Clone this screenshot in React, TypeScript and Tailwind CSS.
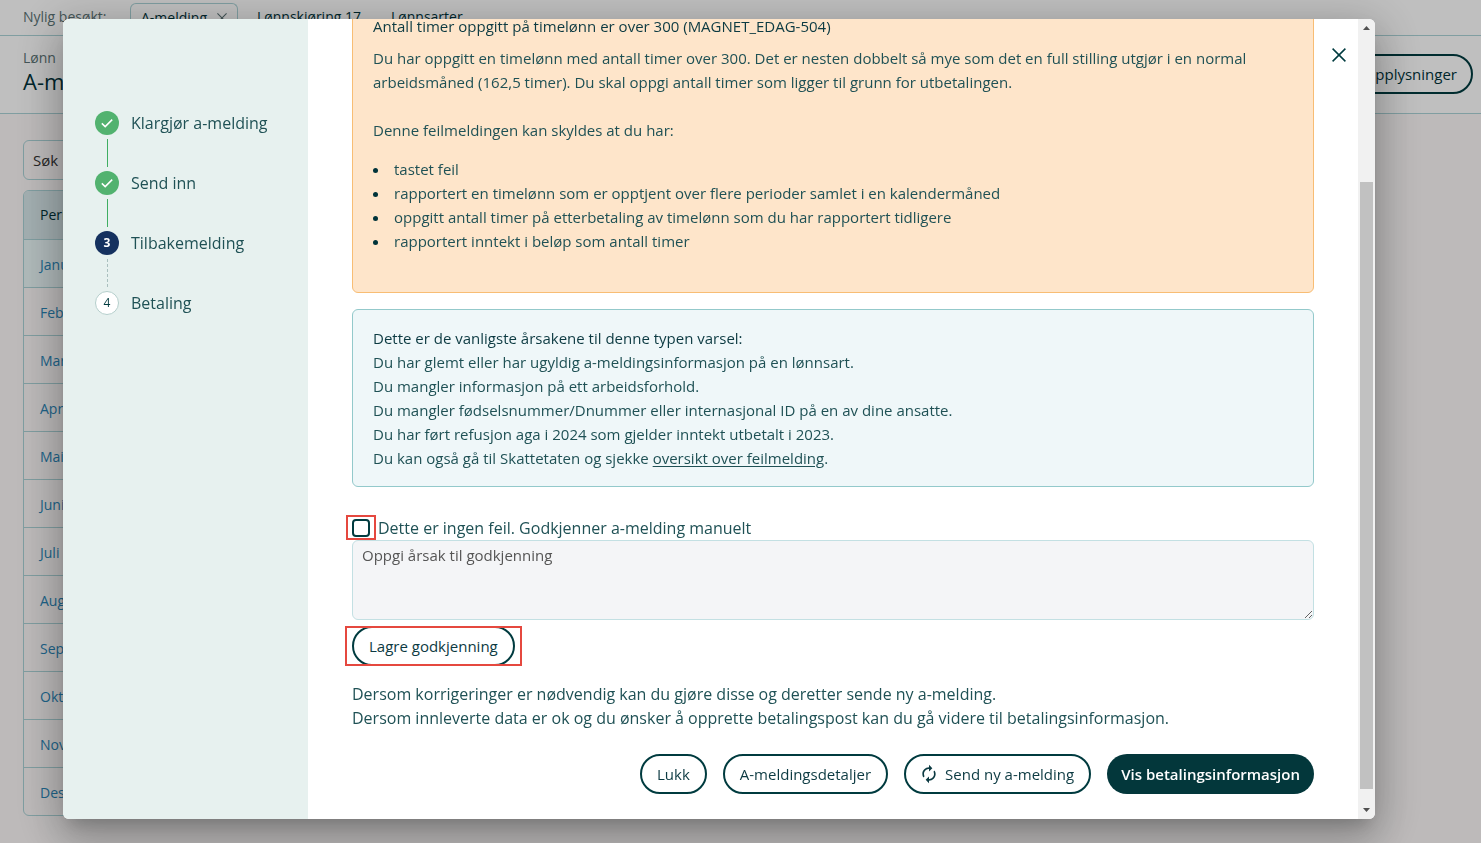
import React from "react";

type StepState = "done" | "current" | "todo";

const steps: { label: string; state: StepState }[] = [
  { label: "Klargjør a-melding", state: "done" },
  { label: "Send inn", state: "done" },
  { label: "Tilbakemelding", state: "current" },
  { label: "Betaling", state: "todo" },
];

const months = [
  "Januar",
  "Februar",
  "Mars",
  "April",
  "Mai",
  "Juni",
  "Juli",
  "August",
  "September",
  "Oktober",
  "November",
  "Desember",
];

const causes = [
  "tastet feil",
  "rapportert en timelønn som er opptjent over flere perioder samlet i en kalendermåned",
  "oppgitt antall timer på etterbetaling av timelønn som du har rapportert tidligere",
  "rapportert inntekt i beløp som antall timer",
];

const outlineButton =
  "flex h-10 items-center gap-2 rounded-full border-2 border-[#003b3f] bg-white px-[15px] text-[15px] leading-6 font-medium text-[#0c3a42]";

function CrossIcon({ className }: { className: string }) {
  return (
    <svg viewBox="0 0 14 14" className={className} fill="none" stroke="currentColor" strokeWidth="1.5" aria-hidden="true">
      <path d="M0.6 0.6 13.4 13.4M13.4 0.6 0.6 13.4" />
    </svg>
  );
}

function SyncIcon() {
  return (
    <svg viewBox="2.4 0 19.2 24" className="h-5 w-4" fill="currentColor" aria-hidden="true">
      <path d="M12 6v3l4-4-4-4v3c-4.42 0-8 3.58-8 8 0 1.57.46 3.03 1.24 4.26L6.7 14.8c-.45-.83-.7-1.79-.7-2.8 0-3.31 2.69-6 6-6zm6.76 1.74L17.3 9.2c.44.84.7 1.79.7 2.8 0 3.31-2.69 6-6 6v-3l-4 4 4 4v-3c4.42 0 8-3.58 8-8 0-1.57-.46-3.03-1.24-4.26z" />
    </svg>
  );
}

function StepMarker({ state, number }: { state: StepState; number: number }) {
  if (state === "done") {
    return (
      <span className="flex size-6 items-center justify-center rounded-full bg-[#52b26f] text-white">
        <svg viewBox="0 0 12 12" className="size-3" fill="none" stroke="currentColor" strokeWidth="1.5" aria-hidden="true">
          <path d="M0.8 6.4 4.2 9.6 11.2 2.6" />
        </svg>
      </span>
    );
  }
  if (state === "current") {
    return (
      <span className="flex size-6 items-center justify-center rounded-full bg-[#15315f] text-xs font-bold text-white">
        {number}
      </span>
    );
  }
  return (
    <span className="flex size-6 items-center justify-center rounded-full border border-[#b5cfcc] bg-white text-xs text-[#003b3f]">
      {number}
    </span>
  );
}

function Background() {
  return (
    <div className="min-h-screen bg-[#fcf9f9] text-[#00333a]">
      <nav className="flex h-9 items-start border-b border-[#abd3d7] bg-white pl-[23px] text-sm">
        <span className="w-[107px] pt-[7px] text-[#5b7375]">Nylig besøkt:</span>
        <a href="#a-melding" className="mt-[3px] flex h-[33px] items-center gap-2.5 rounded-t-md border border-b-0 border-[#abd3d7] px-2.5 pb-1">
          A-melding
          <CrossIcon className="size-2.5 text-[#5b7375]" />
        </a>
        <a href="#lonnskjoring" className="ml-[19px] pt-[7px]">Lønnskjøring 17</a>
        <a href="#lonnsarter" className="ml-[30px] pt-[7px]">Lønnsarter</a>
      </nav>
      <header className="flex h-[78px] items-center justify-between border-b border-[#abd3d7] bg-white pr-2 pb-px pl-[23px]">
        <div className="pb-1.5">
          <p className="text-sm leading-5 text-[#5b7375]">Lønn</p>
          <h1 className="text-[22px] leading-[26px] font-medium">A-melding</h1>
        </div>
        <button type="button" className="h-10 rounded-full border-2 border-[#003b3f] px-3.5 text-[15px] font-medium">
          Opplysninger
        </button>
      </header>
      <main className="pt-[26px] pr-32 pl-[23px]">
        <input
          aria-label="Søk"
          placeholder="Søk"
          className="block h-10 w-80 rounded-md border border-[#abd3d7] px-[9px] text-[15px] placeholder:text-[#333]"
        />
        <div className="mt-2.5 overflow-hidden rounded-md border border-[#abd3d7]">
          <table className="w-full text-left text-sm">
            <thead>
              <tr className="h-12 bg-[#d9e9ec]">
                <th className="px-4 font-medium">Periode</th>
              </tr>
            </thead>
            <tbody>
              {months.map((month) => (
                <tr key={month} className="h-12 border-t border-[#abd3d7] first:bg-[#ebf8f9]">
                  <td className="px-4 pt-[3px]">
                    <a href="#periode" className="text-[#2a86b8]">{month}</a>
                  </td>
                </tr>
              ))}
            </tbody>
          </table>
        </div>
      </main>
    </div>
  );
}

function Scrollbar() {
  return (
    <div className="flex w-[17px] shrink-0 flex-col items-center bg-[#f1f1f1]" aria-hidden="true">
      <svg viewBox="0 0 17 17" className="size-[17px] shrink-0" fill="#505050">
        <path d="M5 11 8.5 7 12 11Z" />
      </svg>
      <div className="flex-[146]" />
      <div className="w-[13px] flex-[607] bg-[#c1c1c1]" />
      <div className="flex-[13]" />
      <svg viewBox="0 0 17 17" className="size-[17px] shrink-0" fill="#505050">
        <path d="M5 6 8.5 10 12 6Z" />
      </svg>
    </div>
  );
}

function Dialog() {
  return (
    <div
      role="dialog"
      aria-modal="true"
      aria-label="Tilbakemelding"
      className="flex min-w-0 flex-1 overflow-hidden rounded-md bg-white text-[#1f5155] shadow-[0_11px_15px_-7px_rgba(0,0,0,0.16),0_24px_38px_3px_rgba(0,0,0,0.12),0_9px_46px_8px_rgba(0,0,0,0.2)]"
    >
      <aside className="w-[245px] shrink-0 bg-[#e7f1ef] pt-[92px] pl-8">
        <ol>
          {steps.map((step, i) => (
            <li key={step.label}>
              <div className="flex items-center gap-3">
                <StepMarker state={step.state} number={i + 1} />
                <span className="text-base leading-6">{step.label}</span>
              </div>
              {i < steps.length - 1 &&
                (step.state === "done" ? (
                  <div className="my-1 ml-3 h-7 w-px bg-[#3fae62]" />
                ) : (
                  <div className="my-1 ml-3 h-7 w-px border-l border-dashed border-l-[#a9bfbe]" />
                ))}
            </li>
          ))}
        </ol>
      </aside>

      <section className="relative flex min-w-0 flex-1 flex-col justify-end overflow-hidden px-11 pb-[25px]">
        <button type="button" aria-label="Lukk vindu" className="absolute top-7 right-[11px] flex size-4 items-center justify-center text-[#003b3f]">
          <CrossIcon className="size-3.5" />
        </button>

        <div className="rounded-md border border-[#f8bd74] bg-[#fee5ca] px-5 pt-4 pb-[39px] text-[15px] leading-6">
          <h2 className="mb-2 font-medium text-[#0c3a42]">Antall timer oppgitt på timelønn er over 300 (MAGNET_EDAG-504)</h2>
          <p>
            Du har oppgitt en timelønn med antall timer over 300. Det er nesten dobbelt så mye som det en full stilling
            utgjør i en normal arbeidsmåned (162,5 timer). Du skal oppgi antall timer som ligger til grunn for
            utbetalingen.
          </p>
          <p className="mt-6">Denne feilmeldingen kan skyldes at du har:</p>
          <ul className="mt-[15px] list-disc pl-[17px] marker:text-[#00333a]">
            {causes.map((cause) => (
              <li key={cause} className="pl-1">{cause}</li>
            ))}
          </ul>
        </div>

        <div className="mt-4 rounded-md border border-[#93c9cb] bg-[#eff7f9] px-5 py-4 text-[15px] leading-6">
          <h2 className="font-medium text-[#0c3a42]">Dette er de vanligste årsakene til denne typen varsel:</h2>
          <p>Du har glemt eller har ugyldig a-meldingsinformasjon på en lønnsart.</p>
          <p>Du mangler informasjon på ett arbeidsforhold.</p>
          <p>Du mangler fødselsnummer/Dnummer eller internasjonal ID på en av dine ansatte.</p>
          <p>Du har ført refusjon aga i 2024 som gjelder inntekt utbetalt i 2023.</p>
          <p>
            Du kan også gå til Skattetaten og sjekke{" "}
            <a href="#feilmelding" className="underline underline-offset-2">oversikt over feilmelding</a>.
          </p>
        </div>

        <div className="mt-[29px] flex h-6 items-center gap-2">
          <span className="relative flex">
            <input
              id="approve"
              type="checkbox"
              className="size-[18px] appearance-none rounded-sm border-2 border-[#003b3f] bg-white checked:bg-[#003b3f]"
            />
            <span className="pointer-events-none absolute -inset-x-1.5 -top-1 -bottom-[3px] border-2 border-[#e5483f]" />
          </span>
          <label htmlFor="approve" className="text-base leading-6">
            Dette er ingen feil. Godkjenner a-melding manuelt
          </label>
        </div>

        <textarea
          aria-label="Oppgi årsak til godkjenning"
          placeholder="Oppgi årsak til godkjenning"
          className="block h-20 w-full shrink-0 resize rounded-md border border-[#c3e0e3] bg-[#f4f5f7] px-[9px] py-0.5 text-[15px] leading-6 placeholder:text-[#555]"
        />

        <div className="relative mt-1.5 self-start">
          <button type="button" className={outlineButton}>Lagre godkjenning</button>
          <span className="pointer-events-none absolute inset-y-0 -inset-x-[7px] border-2 border-[#e5483f]" />
        </div>

        <div className="mt-4 text-base leading-6">
          <p>Dersom korrigeringer er nødvendig kan du gjøre disse og deretter sende ny a-melding.</p>
          <p>Dersom innleverte data er ok og du ønsker å opprette betalingspost kan du gå videre til betalingsinformasjon.</p>
        </div>

        <div className="mt-6 flex justify-end gap-4">
          <button type="button" className={outlineButton}>Lukk</button>
          <button type="button" className={outlineButton}>A-meldingsdetaljer</button>
          <button type="button" className={outlineButton}>
            <SyncIcon />
            Send ny a-melding
          </button>
          <button type="button" className="h-10 rounded-full bg-[#03373b] px-3.5 text-[15px] leading-6 font-semibold text-white">
            Vis betalingsinformasjon
          </button>
        </div>
      </section>
      <Scrollbar />
    </div>
  );
}

export default function App() {
  return (
    <div className="relative h-screen overflow-hidden font-['Open_Sans',sans-serif]">
      <Background />
      <div className="fixed inset-0 flex bg-black/25 pt-[19px] pr-[106px] pb-6 pl-[63px]">
        <Dialog />
      </div>
    </div>
  );
}
